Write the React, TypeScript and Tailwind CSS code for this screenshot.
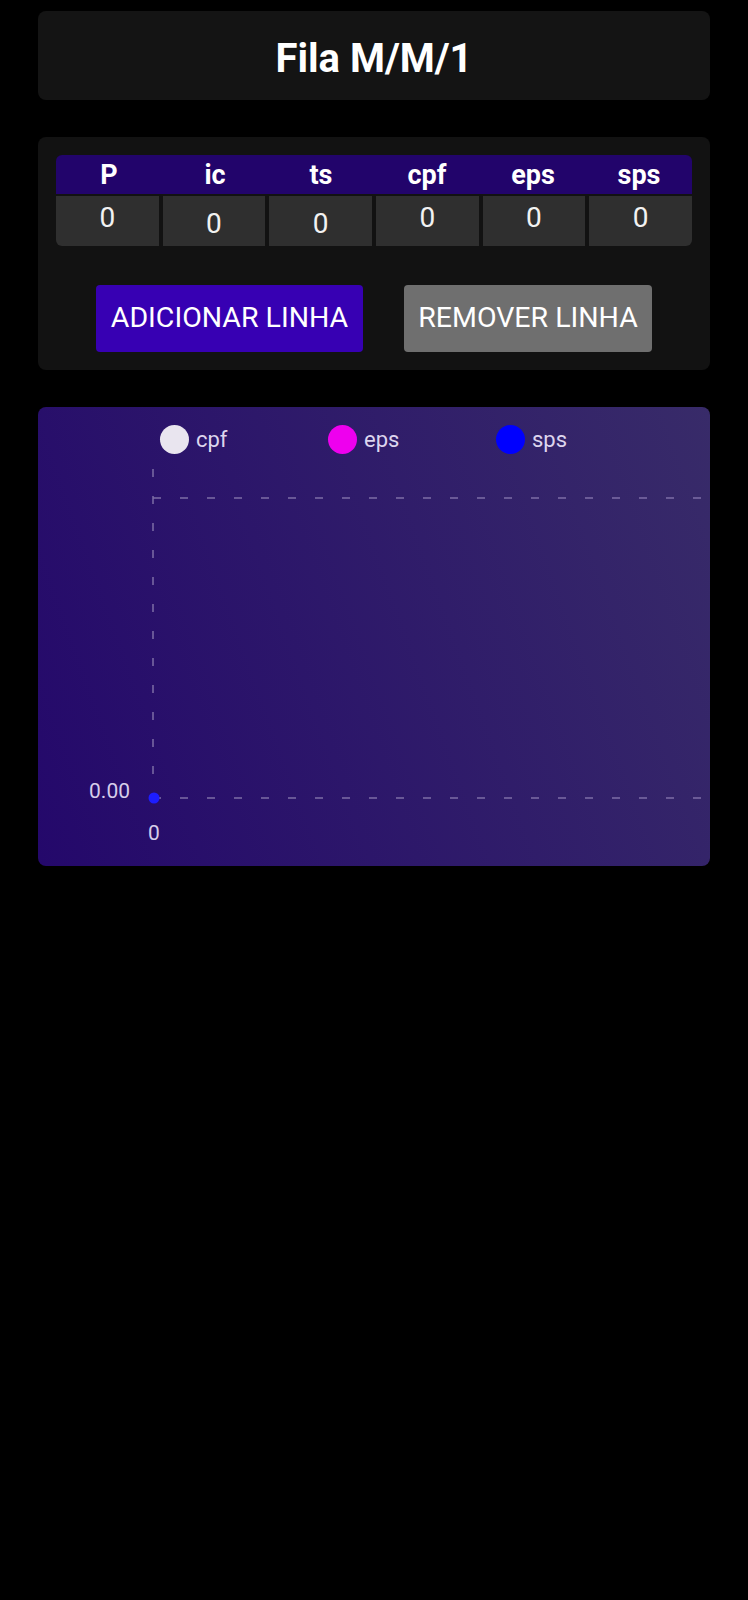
import React from "react";

const cols = ["P", "ic", "ts", "cpf", "eps", "sps"];
const offsets = ["pt-[8px]", "pt-[14px]", "pt-[14px]", "pt-[8px]", "pt-[8px]", "pt-[8px]"];

const legend = [
  { label: "cpf", color: "bg-[#e9e5ef]" },
  { label: "eps", color: "bg-[#ee00ee]" },
  { label: "sps", color: "bg-[#0000ff]" },
];

function Chart() {
  return (
    <svg width="672" height="400" className="block">
      <line x1="115" y1="0" x2="115" y2="329" stroke="#7d6ea6" strokeWidth="1.5" strokeDasharray="8 19" />
      <line x1="115" y1="29" x2="680" y2="29" stroke="#7d6ea6" strokeWidth="1.5" strokeDasharray="8 19" />
      <line x1="115" y1="329" x2="680" y2="329" stroke="#7d6ea6" strokeWidth="1.5" strokeDasharray="8 19" />
      <circle cx="116" cy="329" r="5.5" fill="#1d1dff" />
      <text x="92" y="329" textAnchor="end" fill="#d6cdea" fontSize="21" fontFamily="Roboto, sans-serif">
        0.00
      </text>
      <text x="116" y="371" textAnchor="middle" fill="#d6cdea" fontSize="21" fontFamily="Roboto, sans-serif">
        0
      </text>
    </svg>
  );
}

export default function App() {
  return (
    <div className="min-h-[1600px] w-full bg-black font-['Roboto',sans-serif] text-white">
      <div className="flex flex-col gap-[37px] px-[38px] pt-[11px]">
        <div className="flex h-[89px] items-center justify-center rounded-lg bg-[#141414] pt-[6px]">
          <h1 className="text-[40px] font-bold">Fila M/M/1</h1>
        </div>

        <div className="rounded-lg bg-[#121212] px-[18px] pt-[18px] pb-[18px]">
          <div className="overflow-hidden rounded-md">
            <div className="grid h-[39px] grid-cols-6 bg-[#22046b]">
              {cols.map((c) => (
                <div key={c} className="flex items-center justify-center pt-[2px] text-[27px] font-bold leading-none">
                  {c}
                </div>
              ))}
            </div>
            <div className="mt-[2px] grid h-[50px] grid-cols-6 gap-[4px]">
              {cols.map((c, i) => (
                <div
                  key={c}
                  className={`flex justify-center bg-[#2f2f2f] text-[28px] leading-none text-[#f2f2f2] ${offsets[i]}`}
                >
                  0
                </div>
              ))}
            </div>
          </div>

          <div className="mt-[39px] flex justify-center gap-[41px]">
            <button className="h-[67px] w-[267px] rounded-sm bg-[#3700b3] text-[28.5px] font-normal text-white">
              ADICIONAR LINHA
            </button>
            <button className="h-[67px] w-[248px] rounded-sm bg-[#6f6f6f] text-[28.5px] font-normal text-white">
              REMOVER LINHA
            </button>
          </div>
        </div>

        <div className="h-[459px] overflow-hidden rounded-lg bg-linear-[70deg] from-[#24086b] to-[#382b69]">
          <div className="flex h-[62px] items-center pt-[2px] pl-[122px]">
            {legend.map((l) => (
              <div key={l.label} className="flex w-[168px] items-center gap-[7px]">
                <span className={`h-[29px] w-[29px] rounded-full ${l.color}`} />
                <span className="text-[22px] text-[#ddd5ee]">{l.label}</span>
              </div>
            ))}
          </div>
          <Chart />
        </div>
      </div>
    </div>
  );
}
